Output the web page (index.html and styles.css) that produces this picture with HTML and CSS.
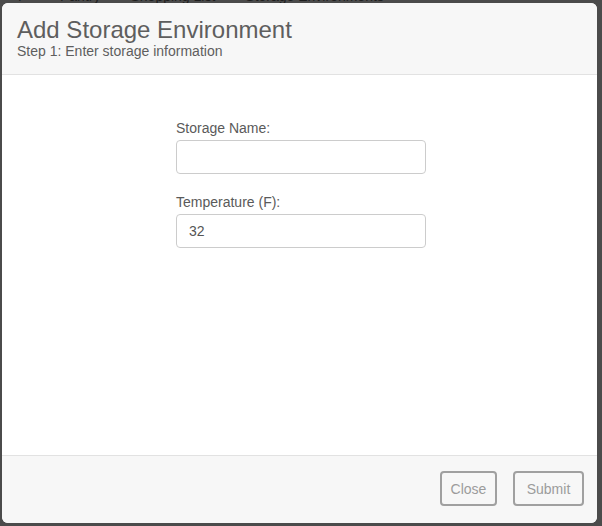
FILE: index.html
```html
<!DOCTYPE html>
<html>
<head>
<meta charset="utf-8">
<link rel="stylesheet" href="styles.css">
</head>
<body>
<div class="backdrop-nav">
  <span class="nav-brand">P</span>
  <span class="nav-item">Pantry</span>
  <span class="nav-item">Shopping List</span>
  <span class="nav-item">Storage Environments</span>
</div>
<div class="modal">
  <div class="modal-header">
    <h1 class="modal-title">Add Storage Environment</h1>
    <div class="modal-subtitle">Step 1: Enter storage information</div>
  </div>
  <div class="modal-body">
    <form class="form">
      <div class="field">
        <label class="field-label">Storage Name:</label>
        <input class="field-input" type="text" value="">
      </div>
      <div class="field">
        <label class="field-label">Temperature (F):</label>
        <input class="field-input" type="text" value="32">
      </div>
    </form>
  </div>
  <div class="modal-footer">
    <button class="btn btn-close" type="button">Close</button>
    <button class="btn btn-submit" type="button">Submit</button>
  </div>
</div>
</body>
</html>
```

FILE: styles.css
```css
html, body {
  margin: 0;
  padding: 0;
  height: 526px;
  overflow: hidden;
}
body {
  background: #4b4b4b;
  font-family: "Liberation Sans", Arial, sans-serif;
  position: relative;
}
.backdrop-nav {
  position: absolute;
  top: -11px;
  left: 0;
  right: 0;
  height: 14px;
  display: flex;
  font-size: 14px;
  line-height: 14px;
  color: #1e1e1e;
  padding-left: 18px;
  gap: 30px;
}
.nav-brand { width: 12px; }
.modal {
  position: absolute;
  left: 2px;
  top: 3px;
  width: 595px;
  height: 520px;
  background: #fff;
  border-radius: 6px;
  display: flex;
  flex-direction: column;
  overflow: hidden;
}
.modal-header {
  background: #f7f7f7;
  border-bottom: 1px solid #e2e2e2;
  padding: 14px 15px 0 15px;
  height: 57px;
}
.modal-title {
  margin: 0;
  font-weight: normal;
  font-size: 24px;
  line-height: 26px;
  color: #5e5e5e;
}
.modal-subtitle {
  font-size: 14px;
  line-height: 16px;
  color: #5e5e5e;
}
.modal-body {
  flex: 1;
  display: flex;
  justify-content: center;
  padding-top: 45px;
  padding-left: 3px;
}
.form {
  width: 250px;
  display: flex;
  flex-direction: column;
  gap: 20px;
}
.field {
  display: flex;
  flex-direction: column;
}
.field-label {
  font-size: 14px;
  line-height: 16px;
  color: #5a5a5a;
  margin-bottom: 4px;
}
.field-input {
  box-sizing: border-box;
  width: 250px;
  height: 34px;
  border: 1px solid #cccccc;
  border-radius: 4px;
  padding: 0 12px;
  font-family: "Liberation Sans", Arial, sans-serif;
  font-size: 14px;
  color: #555;
  background: #fff;
  outline: none;
}
.modal-footer {
  background: #f7f7f7;
  border-top: 1px solid #e2e2e2;
  height: 68px;
  flex-shrink: 0;
  display: flex;
  justify-content: flex-end;
  align-items: flex-start;
  padding-top: 15px;
  padding-right: 13px;
  gap: 16px;
  box-sizing: border-box;
}
.btn {
  box-sizing: border-box;
  height: 35px;
  border: 2px solid #a0a0a0;
  border-radius: 4px;
  background: #f7f7f7;
  color: #9c9c9c;
  font-family: "Liberation Sans", Arial, sans-serif;
  font-size: 14px;
  padding: 0;
}
.btn-close { width: 57px; }
.btn-submit { width: 71px; }
```
